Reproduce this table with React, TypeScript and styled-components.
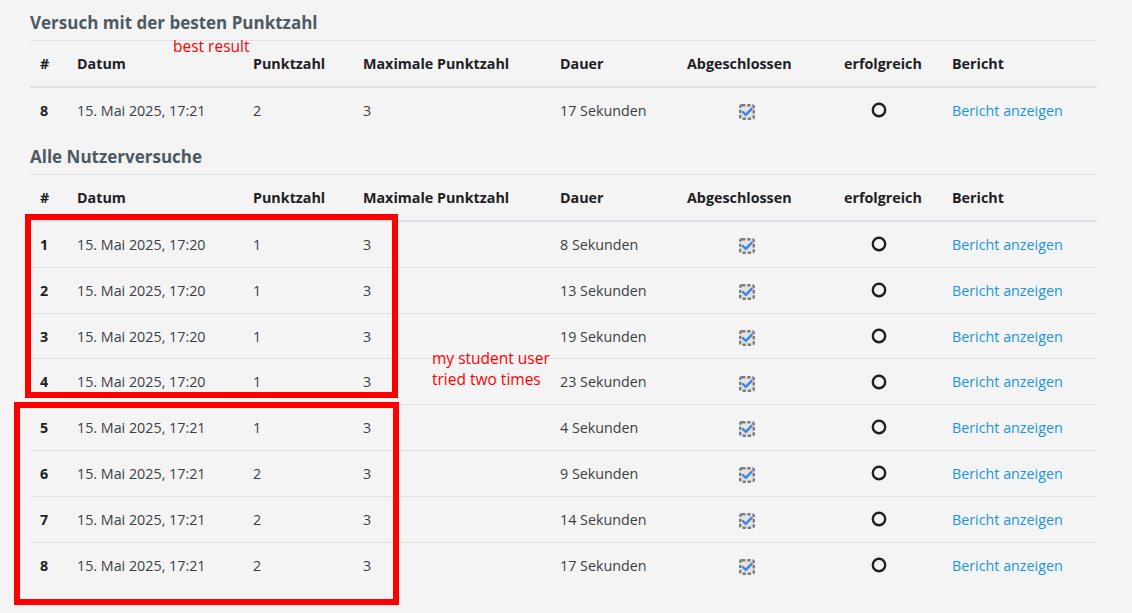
import React from 'react';
import styled, { createGlobalStyle } from 'styled-components';

const GlobalStyle = createGlobalStyle`
    html, body {
        margin: 0;
        padding: 0;
        background: #f4f4f4;
    }
    body {
        font-family: 'Open Sans', 'Noto Sans', 'Liberation Sans', sans-serif;
        font-size: 14.3px;
        color: #3a3f45;
    }
`;

const Page = styled.div`
    position: relative;
    box-sizing: border-box;
    width: 1132px;
    height: 613px;
    padding: 10px 35px 0 30px;
    overflow: hidden;
`;

const Heading = styled.h3<{ $first?: boolean }>`
    margin: ${props => (props.$first ? '0' : '11px')} 0 5px;
    font-size: 17px;
    line-height: 25px;
    font-weight: 700;
    color: #4f5963;
`;

const Table = styled.table`
    width: 100%;
    border-collapse: collapse;
    table-layout: fixed;
`;

const Th = styled.th`
    padding: 12px 10px;
    line-height: 21px;
    text-align: left;
    font-weight: 700;
    color: #1d2125;
    border-top: 1px solid #dee2e6;
    border-bottom: 2px solid #dee2e6;
    white-space: nowrap;
`;

const Td = styled.td<{ $bold?: boolean }>`
    padding: 13px 10px 11px;
    line-height: 20.86px;
    text-align: left;
    font-weight: ${props => (props.$bold ? 700 : 400)};
    color: ${props => (props.$bold ? '#1d2125' : '#3a3f45')};
    border-top: 1px solid #dee2e6;
    white-space: nowrap;
`;

const IconCell = styled(Td)<{ $offset: number }>`
    padding-left: ${props => props.$offset}px;
`;

const IconWrap = styled.span<{ $lift: number }>`
    display: inline-flex;
    vertical-align: middle;
    position: relative;
    top: ${props => props.$lift}px;
`;

const ReportLink = styled.a`
    color: #1a94e0;
    text-decoration: none;
    cursor: pointer;
`;

const Note = styled.div`
    position: absolute;
    color: #ff0000;
    font-size: 15.5px;
    line-height: 21px;
    white-space: nowrap;
`;

const Marker = styled.div`
    position: absolute;
    box-sizing: border-box;
    border: 6px solid #ff0000;
`;

const CompletionIcon = () => (
    <svg width="16" height="16" viewBox="0 0 16 16">
        <rect x="1.2" y="1.2" width="13.6" height="13.6" rx="1.8" fill="#e4e4e4" stroke="#7d7d7d" strokeWidth="2.4" strokeDasharray="3.4 1.8" />
        <path d="M4 8.2 L6.8 10.8 L12.6 4.8" fill="none" stroke="#3f86ea" strokeWidth="2.5" strokeLinecap="round" strokeLinejoin="round" />
    </svg>
);

const RingIcon = () => (
    <svg width="16" height="16" viewBox="0 0 16 16">
        <circle cx="8" cy="8" r="6.2" fill="none" stroke="#1d2125" strokeWidth="2.4" />
    </svg>
);

interface Attempt {
    nr: number;
    date: string;
    score: number;
    duration: string;
}

const ATTEMPTS: Attempt[] = [
    { nr: 1, date: '15. Mai 2025, 17:20', score: 1, duration: '8 Sekunden' },
    { nr: 2, date: '15. Mai 2025, 17:20', score: 1, duration: '13 Sekunden' },
    { nr: 3, date: '15. Mai 2025, 17:20', score: 1, duration: '19 Sekunden' },
    { nr: 4, date: '15. Mai 2025, 17:20', score: 1, duration: '23 Sekunden' },
    { nr: 5, date: '15. Mai 2025, 17:21', score: 1, duration: '4 Sekunden' },
    { nr: 6, date: '15. Mai 2025, 17:21', score: 2, duration: '9 Sekunden' },
    { nr: 7, date: '15. Mai 2025, 17:21', score: 2, duration: '14 Sekunden' },
    { nr: 8, date: '15. Mai 2025, 17:21', score: 2, duration: '17 Sekunden' },
];

const COL_WIDTHS = [37, 176, 110, 197, 127, 157, 108, 155];

const AttemptTable = ({ rows }: { rows: Attempt[] }) => (
    <Table>
        <colgroup>
            {COL_WIDTHS.map((w, i) => (
                <col key={i} style={{ width: w }} />
            ))}
        </colgroup>
        <thead>
            <tr>
                <Th>#</Th>
                <Th>Datum</Th>
                <Th>Punktzahl</Th>
                <Th>Maximale Punktzahl</Th>
                <Th>Dauer</Th>
                <Th>Abgeschlossen</Th>
                <Th>erfolgreich</Th>
                <Th>Bericht</Th>
            </tr>
        </thead>
        <tbody>
            {rows.map(row => (
                <tr key={row.nr}>
                    <Td $bold>{row.nr}</Td>
                    <Td>{row.date}</Td>
                    <Td>{row.score}</Td>
                    <Td>3</Td>
                    <Td>{row.duration}</Td>
                    <IconCell $offset={62}>
                        <IconWrap $lift={0}>
                            <CompletionIcon />
                        </IconWrap>
                    </IconCell>
                    <IconCell $offset={37}>
                        <IconWrap $lift={-2}>
                            <RingIcon />
                        </IconWrap>
                    </IconCell>
                    <Td>
                        <ReportLink>Bericht anzeigen</ReportLink>
                    </Td>
                </tr>
            ))}
        </tbody>
    </Table>
);

const App = () => (
    <Page>
        <GlobalStyle />
        <Heading $first>Versuch mit der besten Punktzahl</Heading>
        <AttemptTable rows={[ATTEMPTS[7]]} />
        <Heading>Alle Nutzerversuche</Heading>
        <AttemptTable rows={ATTEMPTS} />

        <Note style={{ left: 173, top: 36 }}>best result</Note>
        <Note style={{ left: 432, top: 348 }}>
            my student user
            <br />
            tried two times
        </Note>
        <Marker style={{ left: 25, top: 214, width: 373, height: 184 }} />
        <Marker style={{ left: 14, top: 402, width: 385, height: 203 }} />
    </Page>
);

export default App;
